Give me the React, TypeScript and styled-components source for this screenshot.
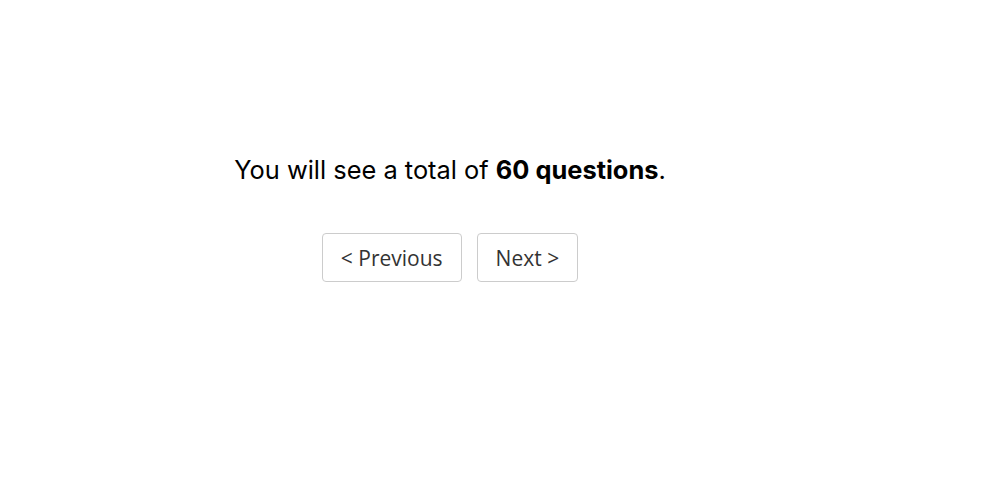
import * as React from "react";
import styled, { createGlobalStyle } from "styled-components";

const GlobalStyle = createGlobalStyle`
  html, body {
    margin: 0;
    padding: 0;
    background: #fff;
  }
`;

const Page = styled.div`
  width: 900px;
  padding-top: 150px;
  display: flex;
  flex-direction: column;
  align-items: center;
`;

const Intro = styled.p`
  margin: 0;
  font-family: Inter, "Liberation Sans", sans-serif;
  font-size: 25.4px;
  line-height: 40px;
  color: #000;
  & > strong {
    font-weight: 700;
  }
`;

const Nav = styled.div`
  display: flex;
  gap: 15px;
  margin-top: 43px;
`;

const NavButton = styled.button`
  font-family: "Open Sans", "Liberation Sans", sans-serif;
  font-size: 21px;
  color: #333;
  background: #fff;
  border: 1px solid #ccc;
  border-radius: 4px;
  height: 49px;
  padding: 0 18px;
  cursor: pointer;
`;

export default function App(): React.ReactElement {
  return (
    <>
      <GlobalStyle />
      <Page>
        <Intro>
          You will see a total of <strong>60 questions</strong>.
        </Intro>
        <Nav>
          <NavButton>&lt; Previous</NavButton>
          <NavButton>Next &gt;</NavButton>
        </Nav>
      </Page>
    </>
  );
}
